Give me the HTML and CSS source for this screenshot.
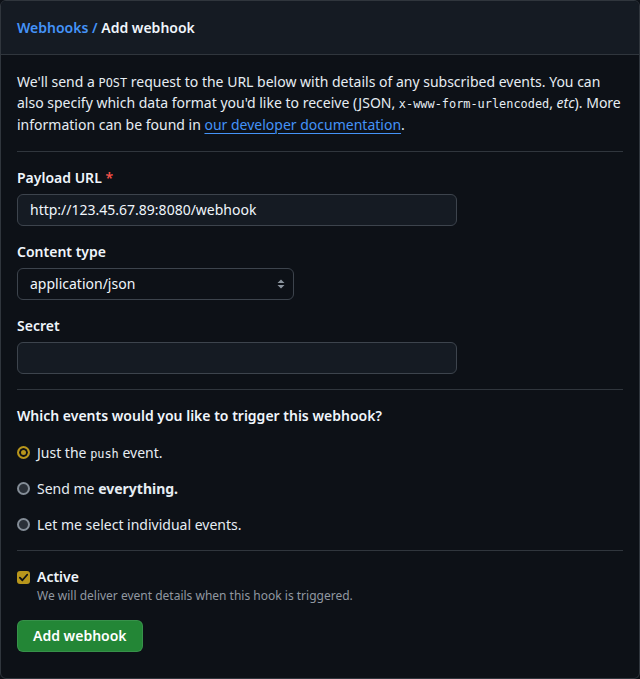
FILE: index.html
```html
<!DOCTYPE html>
<html lang="en">
<head>
<meta charset="utf-8">
<title>Add webhook</title>
<link rel="stylesheet" href="styles.css">
</head>
<body>
<div class="box">
  <div class="box-header">
    <h2 class="title"><a class="crumb" href="#">Webhooks</a><span class="sep"> / </span>Add webhook</h2>
  </div>
  <form class="box-body">
    <p class="intro">We'll send a <code>POST</code> request to the URL below with details of any subscribed events. You can also specify which data format you'd like to receive (JSON, <code>x-www-form-urlencoded</code>, <em>etc</em>). More information can be found in <a class="link" href="#">our developer documentation</a>.</p>
    <hr class="divider">
    <div class="group">
      <label class="label">Payload URL <span class="req">*</span></label>
      <input class="input wide" type="text" value="http://123.45.67.89:8080/webhook">
    </div>
    <div class="group">
      <label class="label">Content type</label>
      <div class="select">
        <span>application/json</span>
        <svg class="arrows" width="8" height="12" viewBox="0 0 8 12"><path d="M4 1.5 L7.5 5 H0.5 Z M4 10.5 L7.5 7 H0.5 Z" fill="#8b949e"/></svg>
      </div>
    </div>
    <div class="group">
      <label class="label">Secret</label>
      <input class="input wide" type="text" value="">
    </div>
    <hr class="divider tight">
    <h3 class="question">Which events would you like to trigger this webhook?</h3>
    <div class="radios">
      <div class="radio-row"><span class="radio checked"></span><span>Just the <code>push</code> event.</span></div>
      <div class="radio-row"><span class="radio"></span><span>Send me <strong>everything.</strong></span></div>
      <div class="radio-row"><span class="radio"></span><span>Let me select individual events.</span></div>
    </div>
    <hr class="divider tight">
    <div class="check-row">
      <span class="checkbox"><svg width="11" height="11" viewBox="0 0 12 12"><path d="M2 6.2 L4.8 9 L10 3" fill="none" stroke="#0d1117" stroke-width="2" stroke-linecap="round" stroke-linejoin="round"/></svg></span>
      <div>
        <div class="check-label">Active</div>
        <div class="note">We will deliver event details when this hook is triggered.</div>
      </div>
    </div>
    <div class="actions">
      <button class="btn-primary" type="button">Add webhook</button>
    </div>
  </form>
</div>
</body>
</html>
```
FILE: styles.css
```css
* { box-sizing: border-box; }
html, body { margin: 0; padding: 0; background: #0d1117; }
body {
  font-family: "Noto Sans", "Liberation Sans", sans-serif;
  font-size: 14px;
  line-height: 21px;
  color: #e6edf3;
}
.box {
  height: 679px;
  border: 1px solid #30363d;
  border-radius: 6px;
  background: #0d1117;
  overflow: hidden;
}
.box-header {
  background: #151b23;
  border-bottom: 1px solid #30363d;
  padding: 16px;
}
.title {
  margin: 0;
  font-size: 14px;
  font-weight: 600;
  line-height: 21px;
  color: #f0f6fc;
}
.crumb, .sep { color: #4493f8; text-decoration: none; }
.box-body { padding: 16px; }
.intro { margin: 0; color: #e6edf3; line-height: 21.3px; }
code {
  font-family: "DejaVu Sans Mono", "Liberation Mono", monospace;
  font-size: 85%;
  line-height: 1;
}
.link {
  color: #4493f8;
  text-decoration: underline;
  text-underline-offset: 3px;
  text-decoration-thickness: 1px;
}
.divider {
  border: 0;
  border-top: 1px solid #30363d;
  margin: 16px 0 16px;
  height: 0;
}
.divider.tight { margin: 15px 0 16px; }
.group { margin-top: 16px; }
.divider + .group { margin-top: 0; }
.label {
  display: block;
  font-weight: 600;
  line-height: 20px;
  margin-bottom: 6px;
  color: #f0f6fc;
}
.req { color: #f85149; }
.input {
  display: block;
  height: 32px;
  padding: 0 12px;
  font-family: inherit;
  font-size: 14px;
  color: #f0f6fc;
  background: #151b23;
  border: 1px solid #3d444d;
  border-radius: 6px;
  outline: none;
}
.wide { width: 440px; }
.select {
  width: 277px;
  height: 32px;
  display: flex;
  align-items: center;
  justify-content: space-between;
  padding: 0 8px 0 12px;
  border: 1px solid #3d444d;
  border-radius: 6px;
  background: #0d1117;
  color: #f0f6fc;
}
.arrows { display: block; }
.question {
  margin: 0;
  font-size: 14px;
  font-weight: 600;
  line-height: 20px;
  color: #f0f6fc;
}
.radios {
  display: flex;
  flex-direction: column;
  gap: 15px;
  margin-top: 16px;
}
.radio-row {
  display: flex;
  align-items: center;
  gap: 7px;
  line-height: 21px;
}
.radio {
  width: 13px;
  height: 13px;
  border-radius: 50%;
  border: 2px solid #848d97;
  background: #2a3038;
  flex: none;
}
.radio.checked {
  border-color: #b8961c;
  background: #b8961c;
  box-shadow: inset 0 0 0 2px #0d1117;
}
.check-row {
  display: flex;
  align-items: flex-start;
  gap: 7px;
}
.checkbox {
  width: 13px;
  height: 13px;
  margin-top: 4px;
  border-radius: 3px;
  background: #b8961c;
  display: flex;
  align-items: center;
  justify-content: center;
  flex: none;
}
.checkbox svg { display: block; }
.check-label { font-weight: 600; line-height: 20px; color: #f0f6fc; }
.note {
  font-size: 12px;
  line-height: 18px;
  color: #9198a1;
}
.actions { margin-top: 15px; }
.btn-primary {
  height: 32px;
  padding: 0 15px;
  font-family: inherit;
  font-size: 14px;
  font-weight: 600;
  color: #ffffff;
  background: #238636;
  border: 1px solid rgba(240,246,252,0.1);
  border-radius: 6px;
}
```
